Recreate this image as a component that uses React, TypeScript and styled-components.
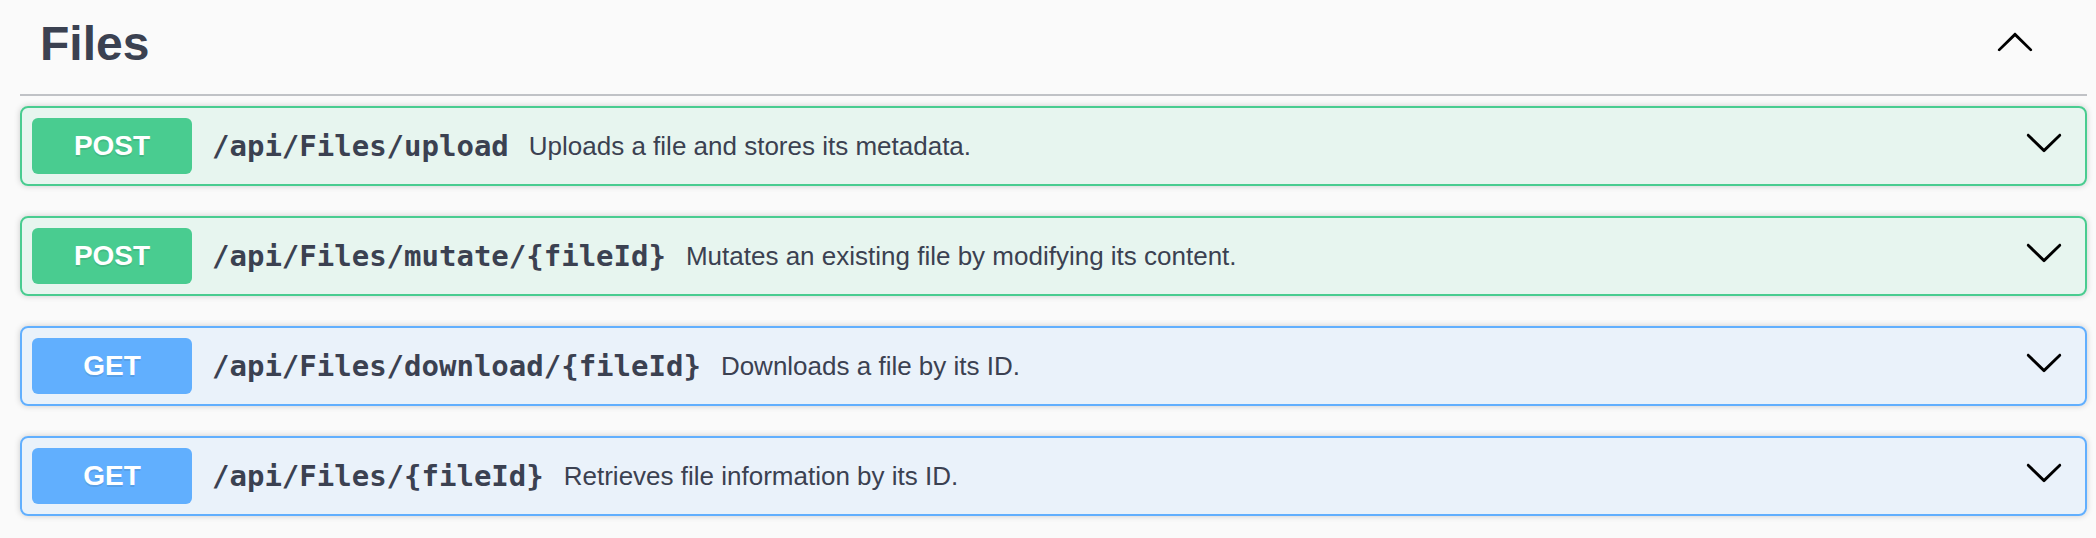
import React from "react";
import styled, { createGlobalStyle } from "styled-components";

const GlobalStyle = createGlobalStyle`
  html, body {
    margin: 0;
    padding: 0;
    background: #fafafa;
  }
  body {
    font-family: "Liberation Sans", Arial, sans-serif;
    color: #3b4151;
  }
`;

const Page = styled.div`
  padding: 0 9px 0 20px;
  background: #fafafa;
  min-height: 538px;
  box-sizing: border-box;
`;

const TagHeading = styled.h3`
  margin: 0 0 10px;
  padding: 20px 40px 26px 20px;
  display: flex;
  align-items: flex-start;
  border-bottom: 2px solid rgba(59, 65, 81, 0.3);
  font-family: "Liberation Sans", Arial, sans-serif;
  font-size: 48px;
  font-weight: 700;
  line-height: 48px;
  color: #3b4151;
`;

const TagName = styled.span`
  flex: 1 1 auto;
`;

const ArrowButton = styled.button<{ $mr: number }>`
  border: none;
  background: none;
  padding: 0;
  margin: 1px ${(p) => p.$mr}px 0 0;
  display: flex;
  cursor: pointer;
  color: #000;
`;

const OpBlock = styled.div<{ $method: "post" | "get" }>`
  margin: 0 0 30px;
  border: 2px solid ${(p) => (p.$method === "post" ? "#49cc90" : "#61affe")};
  background: ${(p) =>
    p.$method === "post" ? "rgba(73,204,144,.1)" : "rgba(97,175,254,.1)"};
  border-radius: 8px;
  box-shadow: 0 0 6px rgba(0, 0, 0, 0.19);
`;

const Summary = styled.div`
  display: flex;
  align-items: center;
  padding: 10px;
`;

const Method = styled.span<{ $method: "post" | "get" }>`
  min-width: 160px;
  padding: 12px 0;
  text-align: center;
  border-radius: 6px;
  background: ${(p) => (p.$method === "post" ? "#49cc90" : "#61affe")};
  color: #fff;
  font-family: "Liberation Sans", Arial, sans-serif;
  font-size: 28px;
  font-weight: 700;
  line-height: 32px;
  text-shadow: 0 2px 0 rgba(0, 0, 0, 0.1);
`;

const Path = styled.span`
  padding: 0 20px;
  font-family: "DejaVu Sans Mono", "Liberation Mono", monospace;
  font-size: 29px;
  font-weight: 700;
  color: #3b4151;
  white-space: nowrap;
`;

const Description = styled.span`
  flex: 1 1 auto;
  font-family: "Liberation Sans", Arial, sans-serif;
  font-size: 26px;
  color: #3b4151;
`;

const BlockArrow = styled.span`
  display: flex;
  margin: 0 11px 8px 0;
  color: #000;
`;

const ChevronDown = () => (
  <svg width="40" height="40" viewBox="0 0 20 20" fill="currentColor">
    <path d="M17.418 6.109c.272-.268.709-.268.979 0s.271.701 0 .969l-7.908 7.83c-.27.268-.707.268-.979 0l-7.908-7.83c-.27-.268-.27-.701 0-.969.271-.268.709-.268.979 0L10 13.25l7.418-7.141z" />
  </svg>
);

const ChevronUp = () => (
  <svg width="40" height="40" viewBox="0 0 20 20" fill="currentColor">
    <path d="M17.418 14.908c.272.268.709.268.979 0s.271-.701 0-.969l-7.908-7.83c-.27-.268-.707-.268-.979 0l-7.908 7.83c-.27.268-.27.701 0 .969.271.268.709.268.979 0L10 7.767l7.418 7.141z" />
  </svg>
);

type Op = { method: "post" | "get"; path: string; desc: string };

const ops: Op[] = [
  { method: "post", path: "/api/Files/upload", desc: "Uploads a file and stores its metadata." },
  { method: "post", path: "/api/Files/mutate/{fileId}", desc: "Mutates an existing file by modifying its content." },
  { method: "get", path: "/api/Files/download/{fileId}", desc: "Downloads a file by its ID." },
  { method: "get", path: "/api/Files/{fileId}", desc: "Retrieves file information by its ID." },
];

export default function App() {
  return (
    <>
      <GlobalStyle />
      <Page>
        <TagHeading>
          <TagName>Files</TagName>
          <ArrowButton $mr={12} aria-label="Collapse operation">
            <ChevronUp />
          </ArrowButton>
        </TagHeading>
        {ops.map((op) => (
          <OpBlock key={op.path} $method={op.method}>
            <Summary>
              <Method $method={op.method}>{op.method.toUpperCase()}</Method>
              <Path>{op.path}</Path>
              <Description>{op.desc}</Description>
              <BlockArrow>
                <ChevronDown />
              </BlockArrow>
            </Summary>
          </OpBlock>
        ))}
      </Page>
    </>
  );
}
